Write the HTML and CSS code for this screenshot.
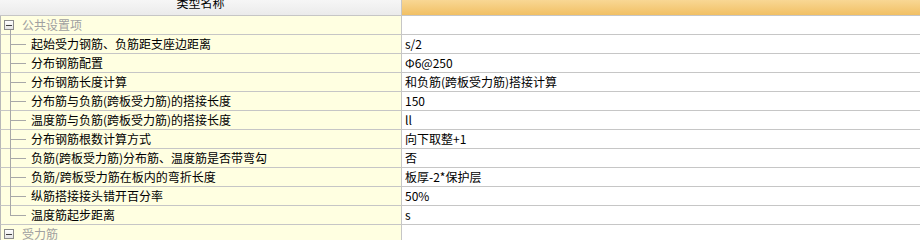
FILE: index.html
```html
<!DOCTYPE html>
<html lang="zh">
<head>
<meta charset="utf-8">
<title>类型名称</title>
<link rel="stylesheet" href="styles.css">
</head>
<body>
<div class="table">
  <div class="row head">
    <div class="cell name"><span class="head-text">类型名称</span></div>
    <div class="cell value"></div>
  </div>
  <div class="row group">
    <div class="cell name"><span class="box"><span class="minus"></span></span><span class="group-text">公共设置项</span></div>
    <div class="cell value"></div>
  </div>
  <div class="row">
    <div class="cell name"><span class="tree first"></span><span class="label">起始受力钢筋、负筋距支座边距离</span></div>
    <div class="cell value">s/2</div>
  </div>
  <div class="row">
    <div class="cell name"><span class="tree"></span><span class="label">分布钢筋配置</span></div>
    <div class="cell value">Φ6@250</div>
  </div>
  <div class="row">
    <div class="cell name"><span class="tree"></span><span class="label">分布钢筋长度计算</span></div>
    <div class="cell value">和负筋(跨板受力筋)搭接计算</div>
  </div>
  <div class="row">
    <div class="cell name"><span class="tree"></span><span class="label">分布筋与负筋(跨板受力筋)的搭接长度</span></div>
    <div class="cell value">150</div>
  </div>
  <div class="row">
    <div class="cell name"><span class="tree"></span><span class="label">温度筋与负筋(跨板受力筋)的搭接长度</span></div>
    <div class="cell value">ll</div>
  </div>
  <div class="row">
    <div class="cell name"><span class="tree"></span><span class="label">分布钢筋根数计算方式</span></div>
    <div class="cell value">向下取整+1</div>
  </div>
  <div class="row">
    <div class="cell name"><span class="tree"></span><span class="label">负筋(跨板受力筋)分布筋、温度筋是否带弯勾</span></div>
    <div class="cell value">否</div>
  </div>
  <div class="row">
    <div class="cell name"><span class="tree"></span><span class="label">负筋/跨板受力筋在板内的弯折长度</span></div>
    <div class="cell value">板厚-2*保护层</div>
  </div>
  <div class="row">
    <div class="cell name"><span class="tree"></span><span class="label">纵筋搭接接头错开百分率</span></div>
    <div class="cell value">50%</div>
  </div>
  <div class="row">
    <div class="cell name"><span class="tree last"></span><span class="label">温度筋起步距离</span></div>
    <div class="cell value">s</div>
  </div>
  <div class="row group">
    <div class="cell name"><span class="box"><span class="minus"></span></span><span class="group-text">受力筋</span></div>
    <div class="cell value"></div>
  </div>
</div>
</body>
</html>
```

FILE: styles.css
```css
html, body {
  margin: 0;
  padding: 0;
  background: #ffffff;
}
body {
  width: 920px;
  height: 240px;
  overflow: hidden;
  font-family: "Noto Sans CJK SC", "DejaVu Sans", sans-serif;
  font-size: 12px;
  color: #000;
}
.table {
  display: flex;
  flex-direction: column;
  width: 920px;
}
.row {
  display: grid;
  grid-template-columns: 402px 1fr;
  height: 19px;
}
.cell {
  box-sizing: border-box;
  border-bottom: 1px solid #c6c6c6;
  display: flex;
  align-items: center;
  white-space: nowrap;
  overflow: hidden;
  line-height: 18px;
}
.cell.name {
  background: #ffffe1;
  border-left: 1px solid #b8b8b8;
  border-right: 1px solid #c6c6c6;
  overflow: visible;
}
.cell.value {
  padding-left: 3px;
  background: #fff;
}
.row.head {
  height: 16px;
}
.row.head .cell.name {
  background: linear-gradient(#f6f6f6, #ebebeb);
  justify-content: center;
  align-items: flex-start;
  border-left: 0;
}
.row.head .cell.value {
  background: linear-gradient(#f9d794, #f1c064);
}
.head-text {
  line-height: 12px;
  margin-top: -3px;
}
.box {
  box-sizing: border-box;
  width: 10px;
  height: 10px;
  margin-left: 3px;
  border: 1px solid #8c8c8c;
  background: linear-gradient(#ffffff, #e4e4e4);
  display: flex;
  align-items: center;
  justify-content: center;
  flex: none;
}
.minus {
  width: 6px;
  height: 1px;
  background: #404040;
}
.group-text {
  margin-left: 8px;
  color: #a0a0a0;
}
.tree {
  flex: none;
  align-self: stretch;
  width: 20px;
  margin-left: 9px;
  margin-top: -1px;
  margin-bottom: -1px;
  background:
    linear-gradient(#a8a8a8, #a8a8a8) 0 0 / 1px 100% no-repeat,
    linear-gradient(#a8a8a8, #a8a8a8) 0 10px / 16px 1px no-repeat;
}
.tree.first {
  margin-top: -5px;
  background:
    linear-gradient(#a8a8a8, #a8a8a8) 0 0 / 1px 100% no-repeat,
    linear-gradient(#a8a8a8, #a8a8a8) 0 14px / 16px 1px no-repeat;
}
.tree.last {
  background:
    linear-gradient(#a8a8a8, #a8a8a8) 0 0 / 1px 11px no-repeat,
    linear-gradient(#a8a8a8, #a8a8a8) 0 10px / 16px 1px no-repeat;
}
.label {
  margin-left: 1px;
}
```
